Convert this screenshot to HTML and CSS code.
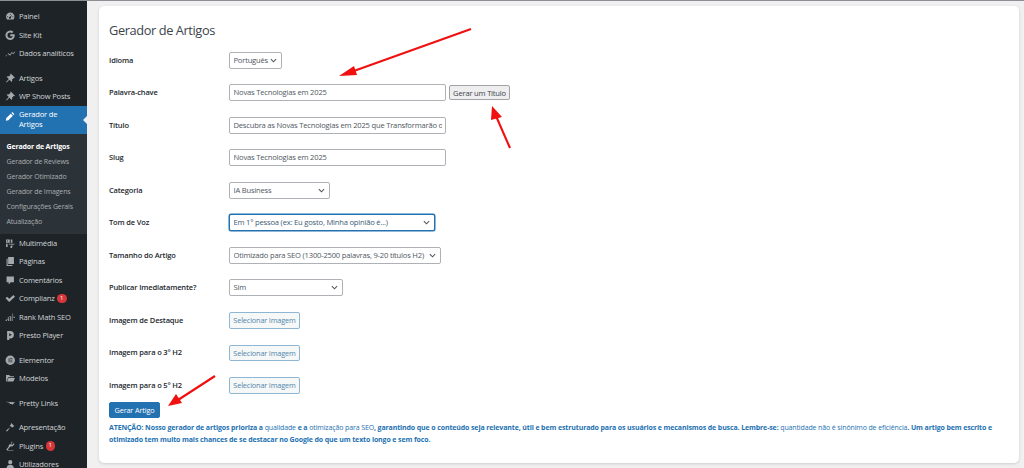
FILE: index.html
```html
<!DOCTYPE html>
<html lang="pt">
<head>
<meta charset="utf-8">
<title>Gerador de Artigos</title>
<link rel="stylesheet" href="styles.css">
</head>
<body>
<div class="shell">
  <nav class="sidebar">
    <ul class="menu menu-top">
      <li class="item"><svg class="ico" viewBox="0 0 20 20"><path d="M10 3a8 8 0 0 0-8 8c0 2 .7 3.800 2 5h12a8 8 0 0 0 2-5 8 8 0 0 0-8-8zm0 2a1 1 0 1 1 0 2 1 1 0 0 1 0-2zM5 10a1 1 0 1 1 0 2 1 1 0 0 1 0-2zm10 0a1 1 0 1 1 0 2 1 1 0 0 1 0-2zm-1-3.500-3 5.200a2 2 0 1 1-1.500-.9z"/></svg>Painel</li>
      <li class="item"><svg class="ico" viewBox="0 0 20 20"><path d="M18.400 8.300H10v3.500h4.800c-.5 2.200-2.400 3.500-4.800 3.500a5.300 5.300 0 0 1 0-10.600c1.300 0 2.500.5 3.400 1.300l2.600-2.600A9 9 0 1 0 10 19c4.500 0 8.600-3.300 8.600-9 0-.6-.1-1.200-.2-1.700z"/></svg>Site Kit</li>
      <li class="item"><svg class="ico" viewBox="0 0 20 20"><path d="M1 15l1.500-1.500 1 1L2 16zM5 11.500l1.500-1.500 3 2.500 3.500-5 2.500 2.500 3-3.500 1 1-4 4.500-2.300-2.300-3.500 5-3.200-2.700-.8.800z"/></svg>Dados analíticos</li>
    </ul>
    <ul class="menu menu-group">
      <li class="item"><svg class="ico" viewBox="0 0 20 20"><path d="M11 1l8 8-1.500 1-1-.5-3 3c.6 1.800.2 3.300-.8 4.500L8.500 12.800 3 18l-1-1 5.200-5.500L3 7.300c1.200-1 2.700-1.400 4.500-.8l3-3-.5-1z"/></svg>Artigos</li>
      <li class="item"><svg class="ico" viewBox="0 0 20 20"><path d="M11 1l8 8-1.500 1-1-.5-3 3c.6 1.800.2 3.300-.8 4.500L8.500 12.800 3 18l-1-1 5.200-5.500L3 7.300c1.200-1 2.700-1.400 4.500-.8l3-3-.5-1z"/></svg>WP Show Posts</li>
      <li class="item current"><svg class="ico" viewBox="0 0 20 20"><path d="M14 2l4 4-1.800 1.800-4-4zM11 5l4 4-8.500 8.500L1.500 18.500l1-5z"/></svg><span>Gerador de<br>Artigos</span></li>
    </ul>
    <ul class="submenu">
      <li class="sub sub-on">Gerador de Artigos</li>
      <li class="sub">Gerador de Reviews</li>
      <li class="sub">Gerador Otimizado</li>
      <li class="sub">Gerador de Imagens</li>
      <li class="sub">Configurações Gerais</li>
      <li class="sub">Atualização</li>
    </ul>
    <ul class="menu menu-after">
      <li class="item"><svg class="ico" viewBox="0 0 20 20"><path d="M2 3h7v6H2zm2.500 1.500a1 1 0 1 0 0 2 1 1 0 0 0 0-2zM11 3h3v6h-3zM2 11h3v6H2zM7 11h11v1.500h-4V17a2 2 0 1 1-1.500-1.800V12.500H7z"/></svg>Multimédia</li>
      <li class="item"><svg class="ico" viewBox="0 0 20 20"><path d="M6 2h11v13H6zM3 5h2v12h9v2H3z"/></svg>Páginas</li>
      <li class="item"><svg class="ico" viewBox="0 0 20 20"><path d="M3 3h14v11h-6l-4 4v-4H3z"/></svg>Comentários</li>
      <li class="item"><svg class="ico" viewBox="0 0 20 20"><path d="M1 10l3-3 4 4 8-7 3 3-11 10z"/></svg>Complianz<span class="badge">1</span></li>
      <li class="item"><svg class="ico" viewBox="0 0 20 20"><path d="M1 16l3-3 1 1-2 3H1zM6 12h2v5H6zM10 8h2v9h-2zM14 3h1v14h-1zM16 9h3v2h-3zM5 11l4-3 .6 1-4 3z"/></svg>Rank Math SEO</li>
      <li class="item"><svg class="ico" viewBox="0 0 20 20"><path d="M4 2h6a7 7 0 0 1 7 7 7 7 0 0 1-7 7H8v3H4zm4 4v6l5-3z"/></svg>Presto Player</li>
    </ul>
    <ul class="menu menu-group">
      <li class="item"><svg class="ico" viewBox="0 0 20 20"><path d="M10 1a9 9 0 1 0 0 18 9 9 0 0 0 0-18zM7 6h1.500v8H7zm3 0h4v1.500h-4zm0 3.200h4v1.500h-4zm0 3.300h4V14h-4z" fill-rule="evenodd"/></svg>Elementor</li>
      <li class="item"><svg class="ico" viewBox="0 0 20 20"><path d="M2 4h6l2 2h7v2H6l-3 8H2zM6.500 9.500H19L16 16H4z"/></svg>Modelos</li>
    </ul>
    <ul class="menu menu-group">
      <li class="item"><svg class="ico" viewBox="0 0 20 20"><path d="M1 7l18 1-5 5-2-2-4 1 2-2.500z"/></svg>Pretty Links</li>
    </ul>
    <ul class="menu menu-group">
      <li class="item"><svg class="ico" viewBox="0 0 20 20"><path d="M12 2l6 6-3 1-1 2-3-3-6 9-3 1 1-3 8-6-2-3 2-1z"/></svg>Apresentação</li>
      <li class="item"><svg class="ico" viewBox="0 0 20 20"><path d="M13 1l1.500 1.500-3 3 2 2 3-3L18 6l-3 3.500c-1 1-3 1.300-4 .7L7 14c0 1-.5 2-1.500 3H2l5-6.500C6.500 9.500 7 8 8 7l1.500-1.500 1 1zM4 18h12v1.500H4z"/></svg>Plugins<span class="badge">1</span></li>
      <li class="item"><svg class="ico" viewBox="0 0 20 20"><path d="M10 2a4 4 0 1 1 0 8 4 4 0 0 1 0-8zM3 18c0-4 2-7 7-7s7 3 7 7z"/></svg>Utilizadores</li>
    </ul>
  </nav>

  <main class="content">
    <section class="card">
      <h1 class="title">Gerador de Artigos</h1>
      <form class="form">
        <div class="row"><label class="lbl">Idioma</label><div class="field"><select class="ctl w-idioma"><option>Português</option></select></div></div>
        <div class="row"><label class="lbl">Palavra-chave</label><div class="field"><input class="ctl w-input" type="text" value="Novas Tecnologias em 2025"><button type="button" class="btn-grey">Gerar um Título</button></div></div>
        <div class="row"><label class="lbl">Título</label><div class="field"><input class="ctl w-input" type="text" value="Descubra as Novas Tecnologias em 2025 que Transformarão o Futuro"></div></div>
        <div class="row"><label class="lbl">Slug</label><div class="field"><input class="ctl w-input" type="text" value="Novas Tecnologias em 2025"></div></div>
        <div class="row"><label class="lbl">Categoria</label><div class="field"><select class="ctl w-cat"><option>IA Business</option></select></div></div>
        <div class="row"><label class="lbl">Tom de Voz</label><div class="field"><select class="ctl w-tom focus"><option>Em 1° pessoa (ex: Eu gosto, Minha opinião é...)</option></select></div></div>
        <div class="row"><label class="lbl">Tamanho do Artigo</label><div class="field"><select class="ctl w-tam"><option>Otimizado para SEO (1300-2500 palavras, 9-20 títulos H2)</option></select></div></div>
        <div class="row"><label class="lbl">Publicar Imediatamente?</label><div class="field"><select class="ctl w-pub"><option>Sim</option></select></div></div>
        <div class="row"><label class="lbl">Imagem de Destaque</label><div class="field"><button type="button" class="btn-outline">Selecionar Imagem</button></div></div>
        <div class="row"><label class="lbl">Imagem para o 3° H2</label><div class="field"><button type="button" class="btn-outline">Selecionar Imagem</button></div></div>
        <div class="row"><label class="lbl">Imagem para o 5° H2</label><div class="field"><button type="button" class="btn-outline">Selecionar Imagem</button></div></div>
        <button type="button" class="btn-primary">Gerar Artigo</button>
        <p class="note">ATENÇÃO: Nosso gerador de artigos prioriza a <span class="thin">qualidade</span> e a <span class="thin">otimização para SEO</span>, garantindo que o conteúdo seja relevante, útil e bem estruturado para os usuários e mecanismos de busca. Lembre-se: <span class="thin">quantidade não é sinônimo de eficiência</span>. Um artigo bem escrito e otimizado tem muito mais chances de se destacar no Google do que um texto longo e sem foco.</p>
      </form>
    </section>
  </main>
</div>
<svg class="arrows" width="1024" height="468" viewBox="0 0 1024 468">
  <path d="M471 29 L351 72" class="arrow-line"/><path d="M339 76 L354 66 L357 75 Z" class="arrow-head"/>
  <path d="M510 148 L496 116" class="arrow-line"/><path d="M492 106 L502 117 L491 120 Z" class="arrow-head"/>
  <path d="M215 376 L178 400" class="arrow-line"/><path d="M168 406 L176 394 L182 403 Z" class="arrow-head"/>
</svg>
</body>
</html>
```
FILE: styles.css
```css
* { box-sizing: border-box; }
html, body { margin: 0; padding: 0; height: 100%; overflow: hidden; }
body { font-family: "Open Sans", "Noto Sans", sans-serif; background: #f0f0f1; color: #2c3338; }
ul { list-style: none; margin: 0; padding: 0; }

.shell { display: flex; height: 468px; border-top: 1px solid #8c8f94; }

.sidebar { width: 87px; flex: none; background: #1d2327; color: #d0d3d6; font-size: 7.600px; letter-spacing: -0.2px; padding-top: 6px; overflow: hidden; }
.menu-group { margin-top: 6px; }
.item { display: flex; align-items: center; height: 18.500px; padding-left: 5px; gap: 3.500px; white-space: nowrap; }
.ico { width: 10.500px; height: 10.500px; flex: none; fill: #a4a9ae; }
.current { position: relative; height: 28px; background: #2271b1; color: #fff; line-height: 9.700px; }
.current .ico { fill: #fff; align-self: flex-start; margin-top: 5px; }
.current::after { content: ""; position: absolute; right: 0; top: 10px; border: 4px solid transparent; border-right-color: #f0f0f1; border-left-width: 0; }
.submenu { background: #2c3338; padding: 5px 0 4px; font-size: 7px; letter-spacing: -0.15px; color: #a9adb1; }
.sub { height: 15.200px; line-height: 15.200px; padding-left: 6.500px; white-space: nowrap; }
.sub-on { color: #fff; font-weight: 700; }
.badge { display: inline-block; width: 9.500px; height: 9.500px; line-height: 9.500px; border-radius: 50%; background: #d63638; color: #fff; font-size: 6px; text-align: center; margin-left: -1px; letter-spacing: 0; }

.content { flex: 1; padding: 5px 5px 0 12px; }
.card { background: #fff; height: 457px; border-radius: 5px; box-shadow: 0 1px 3px rgba(0,0,0,.14); padding: 0 10px; }
.title { margin: 0; padding-top: 14px; height: 38px; font-size: 12.800px; letter-spacing: -0.4px; line-height: 20px; font-weight: 400; color: #3c434a; }

.row { display: grid; grid-template-columns: 120px 1fr; align-items: center; height: 32.500px; }
.lbl { font-size: 7.500px; letter-spacing: -0.15px; font-weight: 600; color: #23282d; position: relative; top: -0.5px; }
.field { display: flex; align-items: center; gap: 3px; }
.ctl { height: 17px; font: 400 7.600px "Open Sans", "Noto Sans", sans-serif; letter-spacing: -0.2px; color: #50575e; background-color: #fff; border: 1px solid #aeb2b6; border-radius: 2px; padding: 0 3.500px 1px; margin: 0; outline: 0; }
select.ctl { appearance: none; -webkit-appearance: none; padding-right: 12px; background-repeat: no-repeat; background-position: right 4px center; background-size: 7px 5px; background-image: url("data:image/svg+xml,%3Csvg xmlns='http://www.w3.org/2000/svg' viewBox='0 0 8 5'%3E%3Cpath d='M1 1l3 3 3-3' fill='none' stroke='%23555' stroke-width='1.200'/%3E%3C/svg%3E"); }
.w-idioma { width: 53px; }
.w-input { width: 217px; }
.w-cat { width: 101px; }
.w-tom { width: 206px; }
.w-tam { width: 212px; }
.w-pub { width: 114px; }
.focus { border-color: #2271b1; box-shadow: 0 0 0 .5px #2271b1; color: #3c5a72; }
.btn-grey { width: 61px; height: 15px; padding: 0; font: 400 7.600px "Open Sans", "Noto Sans", sans-serif; letter-spacing: -0.2px; color: #3c434a; background: #eeeeef; border: 1px solid #a0a3a7; border-radius: 2px; white-space: nowrap; }
.btn-outline { width: 71px; height: 16.500px; padding: 0; font: 400 7.300px "Open Sans", "Noto Sans", sans-serif; letter-spacing: -0.15px; color: #4f86ad; background: #f6f7f7; border: 1px solid #8db7d4; border-radius: 2px; white-space: nowrap; }
.btn-primary { display: block; width: 51px; height: 16.500px; padding: 0; font: 400 7.300px "Open Sans", "Noto Sans", sans-serif; letter-spacing: -0.15px; color: #fff; background: #2271b1; border: 1px solid #2271b1; border-radius: 2px; }
.note { width: 885px; margin: 3.500px 0 0; font-size: 7px; letter-spacing: -0.12px; line-height: 12px; font-weight: 700; color: #2271b1; }
.thin { font-weight: 400; }

.arrows { position: absolute; left: 0; top: 0; pointer-events: none; }
.arrow-line { fill: none; stroke: #f01010; stroke-width: 2.100; }
.arrow-head { fill: #f01010; }
```
